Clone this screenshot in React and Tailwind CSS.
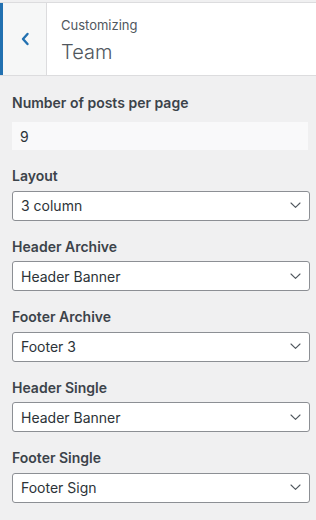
import React from "react";

function Chevron() {
  return (
    <svg width="11" height="7" viewBox="0 0 11 7" fill="none" className="shrink-0">
      <path d="M1 1l4.5 4.3L10 1" stroke="#50575e" strokeWidth="1.1" strokeLinecap="round" strokeLinejoin="round" />
    </svg>
  );
}

function SelectField({ label, value }) {
  return (
    <div className="flex flex-col mb-[12px]">
      <div className="h-[24px] leading-[27px] text-[14px] font-semibold text-[#3c434a] mb-[4.5px]">{label}</div>
      <div className="h-[30px] mr-[6px] bg-white border border-[#8c8f94] rounded-[3px] flex items-center justify-between pl-[8px] pr-[8px]">
        <span className="text-[14px] text-[#2c3338]">{value}</span>
        <Chevron />
      </div>
    </div>
  );
}

export default function App() {
  return (
    <div className="w-[316px] h-[520px] bg-[#f0f0f1] pt-[2px] overflow-hidden" style={{ fontFamily: "Inter, 'Noto Sans', sans-serif" }}>
      <div className="h-[74px] bg-white border-t border-b border-[#dcdcde] flex">
        <div className="w-[47px] h-full border-l-[3px] border-l-[#2271b1] border-r border-r-[#dcdcde] bg-[#f6f7f7] flex items-center justify-center">
          <svg width="10" height="14" viewBox="0 0 10 14" fill="none">
            <path d="M7.5 2L3 7l4.5 5" stroke="#2271b1" strokeWidth="2.4" strokeLinecap="round" strokeLinejoin="round" />
          </svg>
        </div>
        <div className="flex flex-col pl-[14px] pt-[12px]">
          <div className="text-[13px] leading-[20px] text-[#50575e]">Customizing</div>
          <div className="text-[20px] leading-[28px] font-light text-[#50575e] mt-[3px]">Team</div>
        </div>
      </div>
      <div className="flex flex-col pl-[12px] pr-[0px] pt-[13px]">
        <div className="flex flex-col mb-[12px]">
          <div className="h-[24px] leading-[28px] text-[14px] font-semibold text-[#3c434a] mb-[9px]">Number of posts per page</div>
          <div className="h-[28px] mr-[8px] bg-[#f9f9fa] flex items-center pl-[8px] text-[14px] text-[#2c3338]">9</div>
        </div>
        <SelectField label="Layout" value="3 column" />
        <SelectField label="Header Archive" value="Header Banner" />
        <SelectField label="Footer Archive" value="Footer 3" />
        <SelectField label="Header Single" value="Header Banner" />
        <SelectField label="Footer Single" value="Footer Sign" />
      </div>
    </div>
  );
}
